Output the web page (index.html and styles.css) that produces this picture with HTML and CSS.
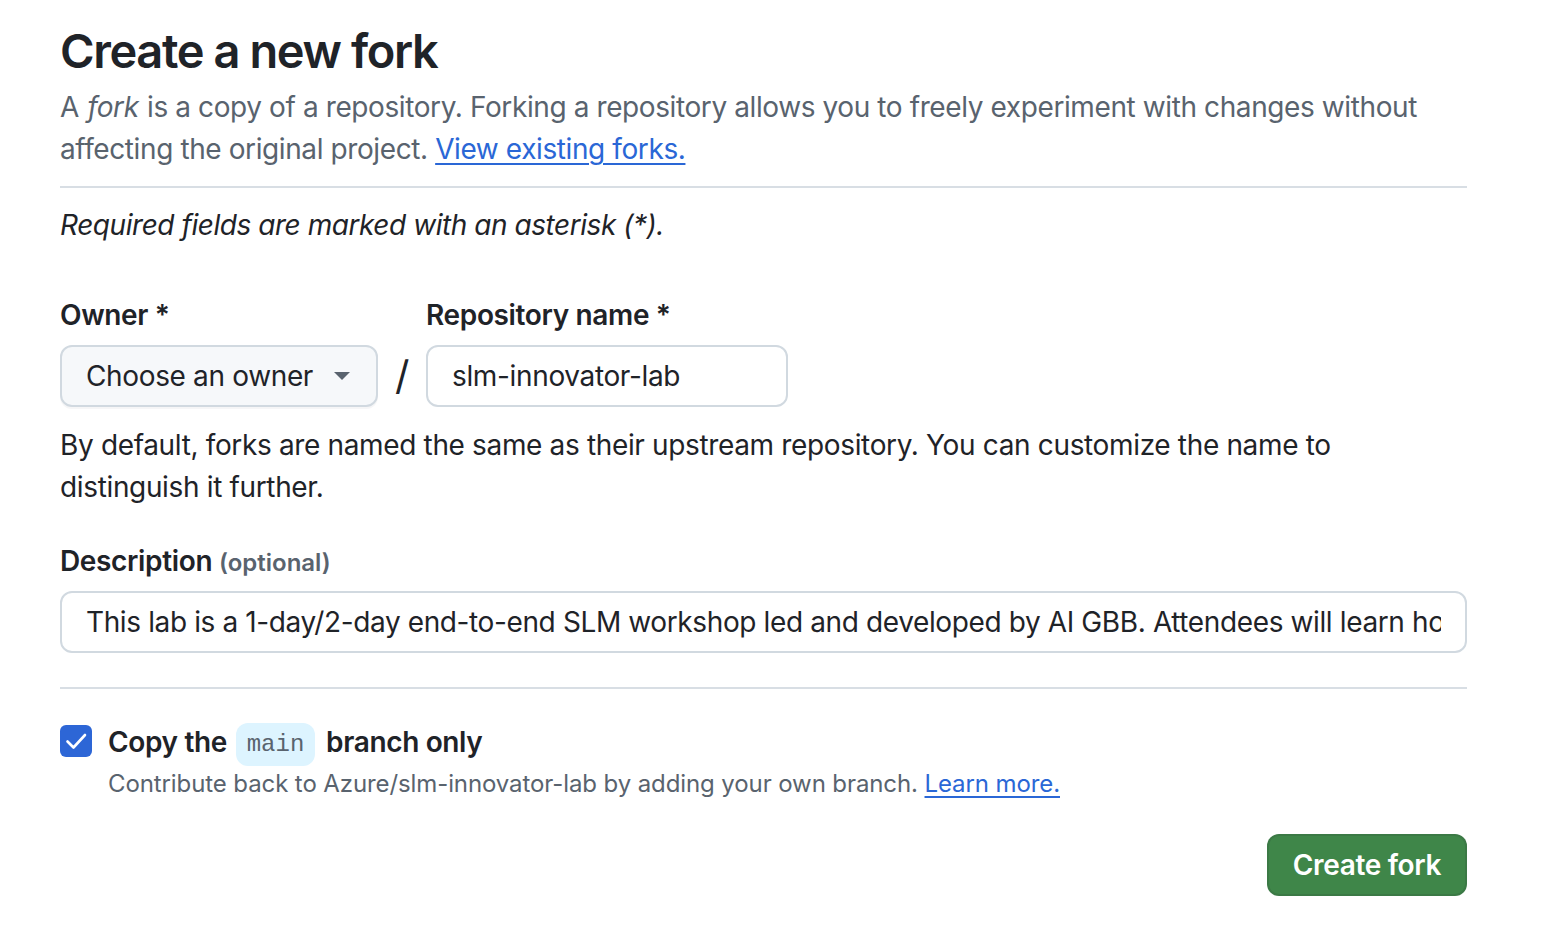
FILE: index.html
```html
<!DOCTYPE html>
<html lang="en">
<head>
<meta charset="utf-8">
<title>Create a new fork</title>
<link rel="stylesheet" href="styles.css">
</head>
<body>
<main class="page">
  <div class="subhead">
    <h1 class="subhead-heading">Create a new fork</h1>
    <p class="subhead-description">A <em class="em-word">fork</em> is a copy of a repository. Forking a repository allows you to freely experiment with changes without affecting the original project. <a href="#" class="link">View existing forks.</a></p>
  </div>

  <p class="required-note"><em>Required fields are marked with an asterisk (*).</em></p>

  <div class="name-row">
    <div class="field">
      <label class="field-label">Owner *</label>
      <button class="select-btn" type="button">
        <span class="select-text">Choose an owner</span>
        <svg class="caret" width="16" height="8" viewBox="0 0 16 8"><path d="M0 0h16L8 8z" fill="#59636e"/></svg>
      </button>
    </div>
    <span class="slash">/</span>
    <div class="field">
      <label class="field-label">Repository name *</label>
      <input class="text-input repo-input" type="text" value="slm-innovator-lab">
    </div>
  </div>

  <p class="help-text">By default, forks are named the same as their upstream repository. You can customize the name to distinguish it further.</p>

  <div class="field desc-field">
    <label class="field-label">Description <span class="optional">(optional)</span></label>
    <input class="text-input desc-input" type="text" value="This lab is a 1-day/2-day end-to-end SLM workshop led and developed by AI GBB. Attendees will learn how to fine-tune and serve SLMs.">
  </div>

  <hr class="divider">

  <div class="check-row">
    <span class="checkbox">
      <svg width="28" height="28" viewBox="0 0 28 28"><path d="M5.5 14.5l6 6L23 8" fill="none" stroke="#fff" stroke-width="2.6" stroke-linecap="round" stroke-linejoin="round"/></svg>
    </span>
    <div class="check-text">
      <div class="check-label">Copy the <code class="branch">main</code> branch only</div>
      <div class="check-note">Contribute back to Azure/slm-innovator-lab by adding your own branch. <a href="#" class="link">Learn more.</a></div>
    </div>
  </div>

  <div class="actions">
    <button class="btn-primary" type="button">Create fork</button>
  </div>
</main>
</body>
</html>
```

FILE: styles.css
```css
* { box-sizing: border-box; }

body {
  margin: 0;
  background: #ffffff;
  color: #1f2328;
  font-family: Inter, "Noto Sans", "Liberation Sans", sans-serif;
  font-size: 28px;
  line-height: 42px;
  letter-spacing: -0.35px;
}

.page {
  width: 1407px;
  margin-left: 60px;
  padding-top: 21px;
}

.subhead {
  padding-bottom: 16px;
  border-bottom: 2px solid #d8dee4;
}

.subhead-heading {
  margin: 0;
  font-size: 47px;
  line-height: 60px;
  font-weight: 600;
  letter-spacing: -1.4px;
}

.subhead-description {
  margin: 5px 0 0;
  color: #59636e;
  letter-spacing: -0.4px;
}

.em-word { padding: 0 1px; }

.link {
  color: #2a67d6;
  text-decoration: underline;
  text-underline-offset: 4px;
  text-decoration-thickness: 2px;
}

.required-note {
  margin: 16px 0 0;
  letter-spacing: -0.45px;
}

.name-row {
  display: flex;
  align-items: flex-end;
  margin-top: 48px;
}

.field {
  display: flex;
  flex-direction: column;
}

.field-label {
  font-weight: 600;
  margin-bottom: 9px;
}

.select-btn {
  display: flex;
  align-items: center;
  justify-content: space-between;
  width: 318px;
  height: 62px;
  padding: 0 24px;
  background: #f6f8fa;
  border: 2px solid #d1d9e0;
  border-radius: 12px;
  font: inherit;
  letter-spacing: inherit;
  color: #1f2328;
  box-shadow: 0 2px 0 rgba(31, 35, 40, 0.04);
}

.select-text { white-space: nowrap; }

.caret { flex: none; margin-left: 16px; margin-right: 2px; }

.slash {
  width: 48px;
  height: 62px;
  text-align: center;
  font-size: 40px;
  line-height: 62px;
  color: #1f2328;
}

.text-input {
  height: 62px;
  padding: 0 24px;
  border: 2px solid #d1d9e0;
  border-radius: 12px;
  font: inherit;
  letter-spacing: inherit;
  color: #1f2328;
  background: #ffffff;
  outline: none;
}

.repo-input { width: 362px; }

.help-text {
  margin: 17px 0 0;
}

.desc-field { margin-top: 32px; }

.optional {
  font-size: 24px;
  line-height: 1;
  color: #59636e;
  font-weight: 600;
  letter-spacing: 0;
}

.desc-input { width: 1407px; letter-spacing: -0.38px; }

.divider {
  margin: 34px 0 0;
  border: 0;
  border-top: 2px solid #d8dee4;
}

.check-row {
  display: flex;
  margin-top: 32px;
}

.checkbox {
  display: flex;
  flex: none;
  align-items: center;
  justify-content: center;
  width: 32px;
  height: 32px;
  margin-top: 4px;
  border-radius: 6px;
  background: #2d66d6;
}

.check-text { margin-left: 16px; }

.check-label {
  font-weight: 600;
  line-height: 42px;
}

.branch {
  display: inline-block;
  height: 43px;
  padding: 0 11px;
  margin: 0 4px 0 2px;
  border-radius: 12px;
  background: #ddf4ff;
  color: #59636e;
  font-family: "Liberation Mono", "DejaVu Sans Mono", monospace;
  font-size: 24px;
  font-weight: 400;
  line-height: 43px;
  letter-spacing: 0;
  vertical-align: middle;
}

.check-note {
  margin-top: 0;
  font-size: 24px;
  line-height: 36px;
  letter-spacing: -0.1px;
  color: #59636e;
}

.actions {
  display: flex;
  justify-content: flex-end;
  margin-top: 32px;
}

.btn-primary {
  height: 62px;
  padding: 0 24px;
  background: #3f8649;
  color: #ffffff;
  border: 2px solid rgba(31, 35, 40, 0.12);
  border-radius: 12px;
  font: inherit;
  letter-spacing: inherit;
  font-weight: 600;
}
```
